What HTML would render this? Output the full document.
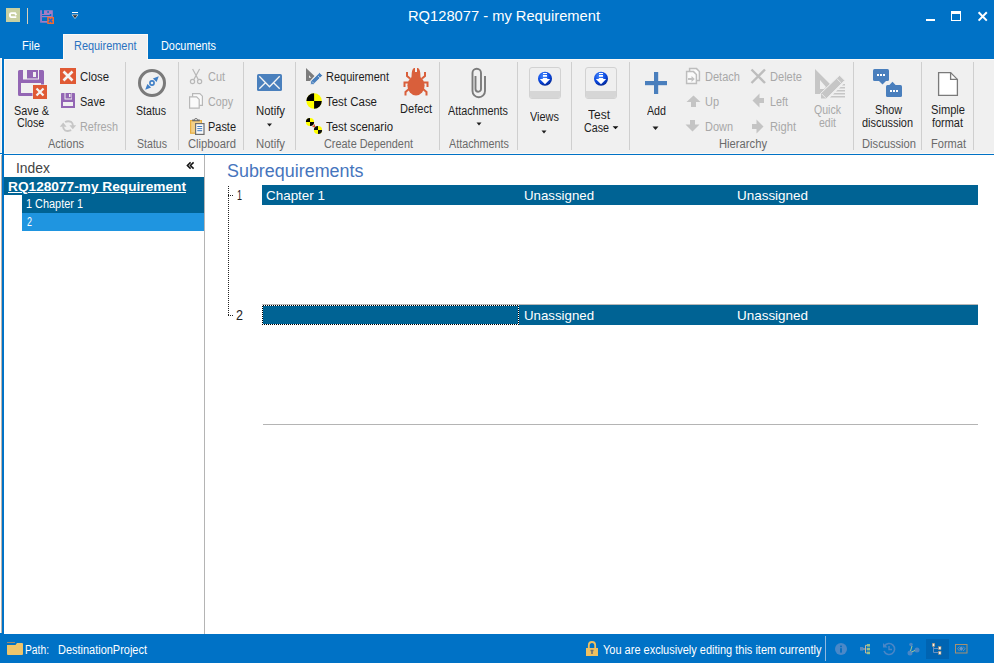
<!DOCTYPE html>
<html><head><meta charset="utf-8"><style>
html,body{margin:0;padding:0;}
body{width:994px;height:663px;position:relative;overflow:hidden;background:#ffffff;font-family:"Liberation Sans", sans-serif;}
.tx{position:absolute;white-space:nowrap;line-height:1;transform-origin:0 0;}
.r{position:absolute;}
svg{position:absolute;overflow:visible;}
</style></head><body>
<!-- title bar + tabs -->
<div class="r" style="left:0;top:0;width:994px;height:59px;background:#0072C6"></div>
<div class="r" style="left:6px;top:8px;width:14px;height:14px;background:#c8d0a2"></div>
<svg style="left:6px;top:8px" width="14" height="14"><path d="M10.2 7.2 L9.1 5.1 H5.4 Q3.9 5.1 3.9 7.1 Q3.9 9.1 5.4 9.1 H10.3" fill="none" stroke="#fff" stroke-width="1.9"/></svg>
<div class="r" style="left:27px;top:8px;width:1px;height:16px;background:#d8d0b8"></div>
<svg style="left:40px;top:10px" width="15" height="15">
 <g fill="#a67cc4">
 <rect x="0.2" y="0.2" width="1.7" height="12.5"/>
 <path d="M4 0.2 H12.8 V7.2 H11.3 V4 H9.8 V5 H1.9 V4 H4 Z M7.2 1.3 V2.8 H9 V1.3 Z" fill-rule="evenodd"/>
 <rect x="1.9" y="6" width="10" height="1.2"/>
 <rect x="1.9" y="11" width="6" height="1.7"/>
 </g>
 <rect x="7.2" y="7" width="6.8" height="7" fill="#f06a30"/><path d="M8.8 8.6 L12.4 12.4 M12.4 8.6 L8.8 12.4" stroke="#1a6ad0" stroke-width="1.4"/>
</svg>
<div class="r" style="left:72px;top:12px;width:6px;height:1.2px;background:#fff"></div>
<svg style="left:71px;top:14px" width="8" height="6"><path d="M1 0.8 L7 0.8 L4 4.6 Z" fill="#333" stroke="#fff" stroke-width="0.6"/></svg>
<!-- window buttons -->
<div class="r" style="left:926px;top:19px;width:9px;height:2px;background:#fff"></div>
<div class="r" style="left:951px;top:11px;width:8px;height:6px;border:1px solid #fff;border-top-width:3px"></div>
<svg style="left:977px;top:11px" width="12" height="11"><path d="M1.6 1.2 L9.8 9.6 M9.8 1.2 L1.6 9.6" stroke="#fff" stroke-width="2"/></svg>
<!-- active tab -->
<div class="r" style="left:63px;top:34px;width:85px;height:26px;background:#fdfaf6"></div>
<div class="r" style="left:64px;top:35px;width:83px;height:25px;background:#f0f0f0"></div>
<!-- ribbon -->
<div class="r" style="left:0;top:58px;width:2px;height:96px;background:#f0f0f0"></div>
<div class="r" style="left:1px;top:58px;width:1px;height:95px;background:#fdfaf6"></div>
<div class="r" style="left:0;top:152px;width:2px;height:1px;background:#fdfaf6"></div>
<div class="r" style="left:0;top:153px;width:2px;height:1px;background:#0072C6"></div>
<div class="r" style="left:2px;top:59px;width:2px;height:575px;background:#0072C6"></div>
<div class="r" style="left:4px;top:59px;width:990px;height:95px;background:#fdfaf6"></div>
<div class="r" style="left:5px;top:60px;width:989px;height:93px;background:#f0f0f0"></div>
<div class="r" style="left:64px;top:59px;width:83px;height:1px;background:#f0f0f0"></div>
<div class="r" style="left:4px;top:154px;width:990px;height:1px;background:#0072C6"></div>
<div class="r" style="left:1px;top:155px;width:1px;height:478px;background:#bcb4ac"></div>
<!-- separators -->
<div class="r" style="left:125px;top:62px;width:1px;height:88px;background:#cfcfcf"></div>
<div class="r" style="left:178px;top:62px;width:1px;height:88px;background:#cfcfcf"></div>
<div class="r" style="left:243px;top:62px;width:1px;height:88px;background:#cfcfcf"></div>
<div class="r" style="left:295px;top:62px;width:1px;height:88px;background:#cfcfcf"></div>
<div class="r" style="left:439px;top:62px;width:1px;height:88px;background:#cfcfcf"></div>
<div class="r" style="left:517px;top:62px;width:1px;height:88px;background:#cfcfcf"></div>
<div class="r" style="left:571px;top:62px;width:1px;height:88px;background:#cfcfcf"></div>
<div class="r" style="left:629px;top:62px;width:1px;height:88px;background:#cfcfcf"></div>
<div class="r" style="left:853px;top:62px;width:1px;height:88px;background:#cfcfcf"></div>
<div class="r" style="left:921px;top:62px;width:1px;height:88px;background:#cfcfcf"></div>
<div class="r" style="left:973px;top:62px;width:1px;height:88px;background:#cfcfcf"></div>
<!-- index panel -->
<div class="r" style="left:204px;top:155px;width:1px;height:479px;background:#b4b4b4"></div>
<div class="r" style="left:4px;top:177px;width:200px;height:18px;background:#006394"></div>
<div class="r" style="left:22px;top:195px;width:182px;height:18px;background:#006394"></div>
<div class="r" style="left:22px;top:213px;width:182px;height:18px;background:#1f95e0"></div>
<!-- content bars -->
<div class="r" style="left:262px;top:185px;width:716px;height:20px;background:#006394"></div>
<div class="r" style="left:262px;top:304px;width:716px;height:1px;background:#b8b8b8"></div>
<div class="r" style="left:262px;top:305px;width:716px;height:20px;background:#006394"></div>
<svg style="left:262px;top:304px" width="258" height="22" shape-rendering="crispEdges">
<defs><pattern id="chk" width="2" height="2" patternUnits="userSpaceOnUse"><rect width="2" height="2" fill="#fff"/><rect width="1" height="1" fill="#000"/><rect x="1" y="1" width="1" height="1" fill="#000"/></pattern></defs>
<rect x="0" y="1" width="257" height="1" fill="url(#chk)"/><rect x="0" y="20" width="257" height="1" fill="url(#chk)"/>
<rect x="0" y="1" width="1" height="20" fill="url(#chk)"/><rect x="256" y="1" width="1" height="20" fill="url(#chk)"/>
</svg>
<div class="r" style="left:263px;top:424px;width:715px;height:1px;background:#b4b4b4"></div>
<!-- status bar -->
<div class="r" style="left:0;top:633px;width:4px;height:1px;background:#0072C6"></div>
<div class="r" style="left:0;top:634px;width:994px;height:29px;background:#0072C6"></div>
<svg style="left:0;top:0" width="994" height="663" viewBox="0 0 994 663">
<!-- Save & Close big -->
<g fill="#9366b4">
 <path d="M19.5 70 H23 V79.5 H39 V70 H42.5 Q44 70 44 71.5 V96 H19.5 Q18 96 18 94.5 V71.5 Q18 70 19.5 70 Z M21 83 V93 H41 V83 Z" fill-rule="evenodd"/>
 <path d="M27 70 H38 V78.5 H27 Z M33 72 V77 H36 V72 Z" fill-rule="evenodd"/>
</g>
<rect x="32.5" y="84.5" width="15" height="15" fill="#f0f0f0"/>
<rect x="33" y="85" width="14" height="14" fill="#e05a35"/>
<path d="M36.5 88.5 L43.5 95.5 M43.5 88.5 L36.5 95.5" stroke="#f4f4f4" stroke-width="2.2"/>
<!-- Close small -->
<rect x="60" y="68" width="16" height="16" fill="#e05a35"/>
<path d="M63.5 71.5 L72.5 80.5 M72.5 71.5 L63.5 80.5" stroke="#f4f4f4" stroke-width="2.6"/>
<!-- Save small -->
<g fill="#9366b4">
 <path d="M61.8 93 H64.5 V99.5 H72 V93 H74.2 Q75 93 75 93.8 V108 H61 V93.8 Q61 93 61.8 93 Z M63 102 V106 H73 V102 Z" fill-rule="evenodd"/>
 <path d="M65.5 93 H71.5 V98.5 H65.5 Z M69 94 V97 H70.5 V94 Z" fill-rule="evenodd"/>
</g>
<!-- Refresh -->
<g fill="none" stroke="#c6c6c6" stroke-width="1.9">
 <path d="M65 122 Q68 120.5 71 121.8 Q72.8 123 73 126"/>
 <path d="M71.2 130.2 Q68 131.6 65 130.3 Q63.2 129.2 63.1 126.5"/>
</g>
<path d="M69.4 125.3 L76.2 125.3 L72.8 129.3 Z M59.8 126.8 L66.6 126.8 L63.2 122.6 Z" fill="#c6c6c6"/>
<!-- Status compass -->
<circle cx="152" cy="83" r="12.5" fill="none" stroke="#7a7a7a" stroke-width="3"/>
<path d="M158.8 76.2 L156.6 82.1 L152.9 78.4 Z M145.2 89.8 L147.4 83.9 L151.1 87.6 Z" fill="#3f7fc6"/>
<circle cx="152" cy="83" r="2.1" fill="none" stroke="#3f7fc6" stroke-width="1.6"/>
<!-- Cut -->
<g fill="none" stroke="#b8b8b8" stroke-width="1.2">
 <circle cx="192.5" cy="81.5" r="2.1"/><circle cx="199.6" cy="81.5" r="2.1"/>
 <path d="M193.8 79.6 L199.6 69 M198.3 79.6 L192.6 69"/>
</g>
<!-- Copy -->
<g fill="#fafafa" stroke="#b8b8b8" stroke-width="1.2">
 <path d="M192.6 93.6 H199.8 L202.4 96.2 V105.4 H192.6 Z"/>
 <path d="M189.6 96.8 H196.6 L199.2 99.4 V108.2 H189.6 Z"/>
</g>
<!-- Paste -->
<rect x="190.6" y="120.6" width="10.8" height="12.6" fill="#f2cf88" stroke="#e8ae40" stroke-width="1.2"/>
<path d="M192.2 121.3 H199.8 V119.6 H197.8 Q197.3 118 196 118 Q194.7 118 194.2 119.6 H192.2 Z" fill="#6a6a6a"/>
<rect x="195" y="119.2" width="2" height="0.9" fill="#e8e8e8"/>
<rect x="195.6" y="123.6" width="8.4" height="10.8" fill="#fafafa" stroke="#6e6e6e" stroke-width="1.2"/>
<path d="M197.3 126.5 H202.2 M197.3 128.6 H202.2 M197.3 130.7 H202.2" stroke="#3a76c0" stroke-width="0.95"/>
<!-- Notify envelope -->
<rect x="257" y="74" width="25" height="17" rx="1.6" fill="#4a80bd"/>
<path d="M259.3 76.2 L269.5 86.8 L279.7 76.2 M259.3 88.8 L265.4 82.7 M273.6 82.7 L279.7 88.8" fill="none" stroke="#f4f4f4" stroke-width="1.3"/>
<path d="M267 123.5 H272 L269.5 126.5 Z" fill="#1e1e1e"/>
<!-- Requirement icon -->
<path d="M306 68 L314.5 76 L310 81 L306 81 Z M309 75.2 V77.8 H311.2 Z" fill="#7c7c7c" fill-rule="evenodd"/>
<path d="M319.6 72.6 L322.6 75.6 L313.4 84.4 L310.6 84.4 L310.6 81.2 Z" fill="#4a80bd" stroke="#f0f0f0" stroke-width="0.8"/>
<path d="M318 76 L320 78 M312 81.5 L313.8 83.3" stroke="#e8eef6" stroke-width="0.7"/>
<!-- Test case -->
<circle cx="314.1" cy="101" r="7.7" fill="#ffff00"/>
<path d="M314.1 101 V93.3 A7.7 7.7 0 0 0 306.4 101 Z M314.1 101 V108.7 A7.7 7.7 0 0 0 321.8 101 Z" fill="#000"/>
<!-- Test scenario -->
<circle cx="310" cy="122" r="4.1" fill="#ffff00"/>
<path d="M310 122 V117.9 A4.1 4.1 0 0 0 305.9 122 Z M310 122 V126.1 A4.1 4.1 0 0 0 314.1 122 Z" fill="#000"/>
<circle cx="318" cy="130" r="4.1" fill="#ffff00"/>
<path d="M318 130 V125.9 A4.1 4.1 0 0 0 313.9 130 Z M318 130 V134.1 A4.1 4.1 0 0 0 322.1 130 Z" fill="#111"/>
<path d="M312 127 L315 124 L315 127.2 Z" fill="#e04a30"/>
<!-- Defect bug -->
<g fill="#d95f3b">
 <ellipse cx="416" cy="85.5" rx="8.6" ry="10"/>
 <path d="M411.5 77 Q411.5 69 414 68 L415 68 L415 72 L417 72 L417 68 L418 68 Q420.5 69 420.5 77 Z"/>
</g>
<g fill="none" stroke="#d95f3b" stroke-width="2">
 <path d="M410 78.5 L407 76 L407 72"/><path d="M422 78.5 L425 76 L425 72"/>
 <path d="M408 82.5 L404.5 82.5 L404.5 87"/><path d="M424 82.5 L427.5 82.5 L427.5 87"/>
 <path d="M409 89 L405.5 92 L405.5 95.5"/><path d="M423 89 L426.5 92 L426.5 95.5"/>
</g>
<!-- Attachments paperclip -->
<path d="M475.5 76 V89 A2.75 2.75 0 0 0 481 89 V73 A4.25 4.25 0 0 0 472.5 73 V91 A6.25 6.25 0 0 0 485 91 V76" fill="none" stroke="#7b7b7b" stroke-width="1.9"/>
<path d="M476.5 122.5 H481.5 L479 125.5 Z" fill="#1e1e1e"/>
<!-- Views button -->
<rect x="529.5" y="67.5" width="31" height="31" rx="2.5" fill="#efefef" stroke="#d2d2d2"/>
<path d="M530 91 H560 V96 Q560 98 558 98 H532 Q530 98 530 96 Z" fill="#d6d6d6"/>
<defs><radialGradient id="bg" cx="0.4" cy="0.3" r="0.8"><stop offset="0" stop-color="#4a8cff"/><stop offset="0.55" stop-color="#0a48e0"/><stop offset="1" stop-color="#001a78"/></radialGradient></defs>
<circle cx="545" cy="78.8" r="7" fill="url(#bg)"/>
<path d="M543 72.9 H547 V73.9 H543 Z M543 75.1 H547 V76.8 H543 Z M542.8 78.1 H547.2 V79.1 H550.2 L545 84.2 L539.8 79.1 H542.8 Z" fill="#fff"/>
<path d="M541.5 130.5 H546.5 L544 133.5 Z" fill="#1e1e1e"/>
<!-- Test Case button -->
<rect x="585.5" y="67.5" width="31" height="31" rx="2.5" fill="#efefef" stroke="#d2d2d2"/>
<path d="M586 91 H616 V96 Q616 98 614 98 H588 Q586 98 586 96 Z" fill="#d6d6d6"/>
<circle cx="601" cy="78.8" r="7" fill="url(#bg)"/>
<path d="M599 72.9 H603 V73.9 H599 Z M599 75.1 H603 V76.8 H599 Z M598.8 78.1 H603.2 V79.1 H606.2 L601 84.2 L595.8 79.1 H598.8 Z" fill="#fff"/>
<path d="M612.6 126.2 H618.4 L615.5 129.3 Z" fill="#111"/>
<!-- Add plus -->
<rect x="645" y="81" width="22" height="4.2" fill="#4a7fbd"/>
<rect x="654" y="72" width="4.2" height="22" fill="#4a7fbd"/>
<path d="M652.5 126.5 H658.5 L655.5 130 Z" fill="#1e1e1e"/>
<!-- Detach -->
<g fill="#fafafa" stroke="#bdbdbd" stroke-width="1.5">
 <path d="M689.6 68.6 H696.5 L699.4 71.5 V80.4 H689.6 Z"/>
 <path d="M686.6 71.6 H693.5 L696.4 74.5 V83.4 H686.6 Z"/>
</g>
<path d="M688 78 H691.5 V76 L694.8 79 L691.5 82 V80 H688 Z" fill="#c2c2c2"/>
<!-- Up / Down -->
<path d="M693.5 95.5 L700.5 102 H696 V107 H691 V102 H686.5 Z" fill="#c4c4c4"/>
<path d="M692.5 131.5 L699.5 124.5 H695 V120 H690 V124.5 H685.5 Z" fill="#c4c4c4"/>
<!-- Delete / Left / Right -->
<path d="M751.5 69.5 L765 83 M765 69.5 L751.5 83" stroke="#bdbdbd" stroke-width="2.4"/>
<path d="M752.5 100.5 L759.5 93.5 V98 H764 V103 H759.5 V107.5 Z" fill="#c4c4c4"/>
<path d="M763.5 126.5 L756.5 119.5 V124 H752 V129 H756.5 V133.5 Z" fill="#c4c4c4"/>
<!-- Quick edit -->
<path d="M815 69 L830 84 L820 94 L815 94 Z M820 80 V89 L824 89 L826 87 Z" fill="#c6c6c6" fill-rule="evenodd"/>
<path d="M845.5 80 L821 104.5 H836 M845.5 83.5 V98" fill="none"/>
<path d="M843.5 84 H845 V85.6 H842 Z M840.5 87 H845 V88.6 H839 Z M837.5 90 H845 V91.6 H836 Z M834.5 93 H845 V94.6 H833 Z M831.5 96 H845 V97.6 H830 Z" fill="#c6c6c6"/>
<path d="M839.6 75.2 L844.8 80.4 L826.2 99 L820.5 99 L820.5 93.6 Z" fill="#c6c6c6" stroke="#f0f0f0" stroke-width="1"/>
<path d="M837.2 79 L841 82.8 M821.8 94 L825.6 97.8" stroke="#f0f0f0" stroke-width="0.9"/>
<!-- Discussion -->
<rect x="873" y="69" width="16" height="12" rx="1.5" fill="#4a7fbd"/>
<path d="M878.5 80.5 L886.5 80.5 L882.5 84.5 Z" fill="#4a7fbd"/>
<rect x="886" y="85" width="16" height="12" rx="1.5" fill="#4a7fbd"/>
<path d="M889 85.5 L896 85.5 L892.5 81.8 Z" fill="#4a7fbd"/>
<path d="M877 74 h2 v2 h-2 Z M880 74 h2 v2 h-2 Z M883 74 h2 v2 h-2 Z M890 90 h2 v2 h-2 Z M893 90 h2 v2 h-2 Z M896 90 h2 v2 h-2 Z" fill="#fff"/>
<!-- Page -->
<path d="M938.6 72.6 H950.6 L957.4 79.4 V95.4 H938.6 Z" fill="#fff" stroke="#7a7a7a" stroke-width="1.3"/>
<path d="M950.6 72.6 V79.4 H957.4" fill="none" stroke="#7a7a7a" stroke-width="1.3"/>
<!-- Index collapse glyph -->
<path d="M190.6 162.4 L187.4 165.5 L190.6 168.6 M193.6 162.4 L190.4 165.5 L193.6 168.6" fill="none" stroke="#111" stroke-width="1.5"/>
<!-- tree dotted lines -->
<path d="M228.5 186 V316" stroke="#222" stroke-width="1" stroke-dasharray="1 1"/>
<path d="M230 195.5 H233 M230 315.5 H233" stroke="#222" stroke-width="1" stroke-dasharray="1 1"/><rect x="228" y="195" width="1" height="1" fill="#222"/><rect x="228" y="315" width="1" height="1" fill="#222"/>
<!-- status bar icons -->
<path d="M7 645 H15.5 L17 643 H22 Q23 643 23 644 V654 Q23 655 22 655 H8 Q7 655 7 654 Z" fill="#eec56c"/>
<rect x="7" y="642" width="8" height="1" fill="#9a8a70"/>
<path d="M588.8 648 V645.5 Q588.8 642 592 642 Q595.2 642 595.2 645.5 V648" fill="none" stroke="#f0c060" stroke-width="1.8"/>
<rect x="586" y="648" width="12" height="8" fill="#f0c060"/>
<path d="M590.5 650.5 H593.5 M592 650.5 V654" stroke="#707070" stroke-width="1.6"/>
<rect x="825" y="636" width="1" height="25" fill="#8fb8e0"/>
<circle cx="841" cy="649" r="6" fill="#4a88c8"/>
<rect x="840" y="645.6" width="2" height="1.6" fill="#0a70c0"/><rect x="840" y="648.2" width="2" height="4.4" fill="#0a70c0"/>
<rect x="860" y="647" width="3.2" height="3.6" fill="#5a8cc0"/>
<path d="M863 649 H866.5 M865.5 645.3 V653 M865.5 645.3 H867 M865.5 653 H867" fill="none" stroke="#c8b49c" stroke-width="1"/>
<g fill="#98c08c"><rect x="867" y="644" width="3" height="2.6"/><rect x="867" y="647.8" width="3" height="2.6"/><rect x="867" y="651.6" width="3" height="2.6"/></g>
<path d="M884.5 646 A5.5 5.5 0 1 1 884 651" fill="none" stroke="#4a86c6" stroke-width="1.6"/>
<path d="M883 643 L883 647.5 L887.5 647.5 Z" fill="#4a86c6"/>
<path d="M889 646 V649.5 H892" fill="none" stroke="#4a86c6" stroke-width="1.4"/>
<circle cx="910" cy="653" r="2.5" fill="#4a86c6"/><circle cx="917" cy="650" r="2.5" fill="#4a86c6"/><circle cx="911" cy="644.5" r="1.8" fill="#4a86c6"/>
<path d="M910.5 651 L912 646 M911.5 652 L915 650.5" stroke="#a8c890" stroke-width="1"/>
<rect x="926" y="639" width="23" height="20" fill="#0064b2"/>
<path d="M933.5 646 V652.5 H938.5 M933.5 648.5 H938.5" fill="none" stroke="#6890c0" stroke-width="1"/>
<rect x="932.3" y="643.3" width="2.4" height="3" fill="#f4f4f0" stroke="#a08a70" stroke-width="0.6"/>
<rect x="938.6" y="646.6" width="2.4" height="3" fill="#f4f4f0" stroke="#a08a70" stroke-width="0.6"/>
<rect x="938.6" y="651.3" width="2.4" height="3" fill="#f4f4f0" stroke="#a08a70" stroke-width="0.6"/>
<rect x="955.5" y="644.5" width="11.5" height="8.5" fill="none" stroke="#a89070" stroke-width="1"/>
<path d="M957.5 648.7 L959.5 646.5 M957.5 648.7 L959.5 651 M965 648.7 L963 646.5 M965 648.7 L963 651" stroke="#8a98a8" stroke-width="0.8"/>
<path d="M961.2 646.3 L963.3 648.7 L961.2 651.1 L959.1 648.7 Z" fill="#6a98c8"/>
</svg>

<div class="tx" id="t0" style="left:408px;top:8.30px;font-size:15px;color:#ffffff;transform:scaleX(0.9799);">RQ128077 - my Requirement</div><div class="tx" id="t1" style="left:22px;top:39.84px;font-size:12px;color:#ffffff;transform:scaleX(0.9305);">File</div><div class="tx" id="t2" style="left:73.5px;top:39.84px;font-size:12px;color:#2a72c0;transform:scaleX(0.9097);">Requirement</div><div class="tx" id="t3" style="left:160.5px;top:39.84px;font-size:12px;color:#ffffff;transform:scaleX(0.9060);">Documents</div><div class="tx" id="t4" style="left:14px;top:104.84px;font-size:12px;color:#1e1e1e;transform:scaleX(0.9043);">Save &amp;</div><div class="tx" id="t5" style="left:17.3px;top:116.84px;font-size:12px;color:#1e1e1e;transform:scaleX(0.8896);">Close</div><div class="tx" id="t6" style="left:80px;top:70.84px;font-size:12px;color:#1e1e1e;transform:scaleX(0.9450);">Close</div><div class="tx" id="t7" style="left:80px;top:95.84px;font-size:12px;color:#1e1e1e;transform:scaleX(0.9138);">Save</div><div class="tx" id="t8" style="left:80px;top:120.84px;font-size:12px;color:#a8a8a8;transform:scaleX(0.9041);">Refresh</div><div class="tx" id="t9" style="left:136px;top:104.84px;font-size:12px;color:#1e1e1e;transform:scaleX(0.8815);">Status</div><div class="tx" id="t10" style="left:208px;top:70.84px;font-size:12px;color:#a8a8a8;transform:scaleX(0.9097);">Cut</div><div class="tx" id="t11" style="left:208px;top:95.84px;font-size:12px;color:#a8a8a8;transform:scaleX(0.8924);">Copy</div><div class="tx" id="t12" style="left:208px;top:120.84px;font-size:12px;color:#1e1e1e;transform:scaleX(0.9124);">Paste</div><div class="tx" id="t13" style="left:256px;top:104.84px;font-size:12px;color:#1e1e1e;transform:scaleX(0.9450);">Notify</div><div class="tx" id="t14" style="left:326px;top:70.84px;font-size:12px;color:#1e1e1e;transform:scaleX(0.9170);">Requirement</div><div class="tx" id="t15" style="left:326px;top:95.84px;font-size:12px;color:#1e1e1e;transform:scaleX(0.9558);">Test Case</div><div class="tx" id="t16" style="left:326px;top:120.84px;font-size:12px;color:#1e1e1e;transform:scaleX(0.9476);">Test scenario</div><div class="tx" id="t17" style="left:400px;top:102.84px;font-size:12px;color:#1e1e1e;transform:scaleX(0.9225);">Defect</div><div class="tx" id="t18" style="left:448px;top:104.84px;font-size:12px;color:#1e1e1e;transform:scaleX(0.8995);">Attachments</div><div class="tx" id="t19" style="left:530px;top:110.84px;font-size:12px;color:#1e1e1e;transform:scaleX(0.9120);">Views</div><div class="tx" id="t20" style="left:588px;top:108.84px;font-size:12px;color:#1e1e1e;transform:scaleX(0.9993);">Test</div><div class="tx" id="t21" style="left:584px;top:121.84px;font-size:12px;color:#1e1e1e;transform:scaleX(0.8924);">Case</div><div class="tx" id="t22" style="left:647px;top:104.84px;font-size:12px;color:#1e1e1e;transform:scaleX(0.8895);">Add</div><div class="tx" id="t23" style="left:705px;top:70.84px;font-size:12px;color:#a8a8a8;transform:scaleX(0.9203);">Detach</div><div class="tx" id="t24" style="left:705px;top:95.84px;font-size:12px;color:#a8a8a8;transform:scaleX(0.9124);">Up</div><div class="tx" id="t25" style="left:705px;top:120.84px;font-size:12px;color:#a8a8a8;transform:scaleX(0.9124);">Down</div><div class="tx" id="t26" style="left:770px;top:70.84px;font-size:12px;color:#a8a8a8;transform:scaleX(0.9225);">Delete</div><div class="tx" id="t27" style="left:770px;top:95.84px;font-size:12px;color:#a8a8a8;transform:scaleX(0.8993);">Left</div><div class="tx" id="t28" style="left:770px;top:120.84px;font-size:12px;color:#a8a8a8;transform:scaleX(0.9281);">Right</div><div class="tx" id="t29" style="left:814px;top:103.84px;font-size:12px;color:#a8a8a8;transform:scaleX(0.8798);">Quick</div><div class="tx" id="t30" style="left:819px;top:116.84px;font-size:12px;color:#a8a8a8;transform:scaleX(0.8781);">edit</div><div class="tx" id="t31" style="left:875px;top:103.84px;font-size:12px;color:#1e1e1e;transform:scaleX(0.8991);">Show</div><div class="tx" id="t32" style="left:862px;top:116.84px;font-size:12px;color:#1e1e1e;transform:scaleX(0.9102);">discussion</div><div class="tx" id="t33" style="left:931px;top:103.84px;font-size:12px;color:#1e1e1e;transform:scaleX(0.9267);">Simple</div><div class="tx" id="t34" style="left:932px;top:116.84px;font-size:12px;color:#1e1e1e;transform:scaleX(0.9113);">format</div><div class="tx" id="t35" style="left:48px;top:137.84px;font-size:12px;color:#6a6a6a;transform:scaleX(0.9146);">Actions</div><div class="tx" id="t36" style="left:137px;top:137.84px;font-size:12px;color:#6a6a6a;transform:scaleX(0.8815);">Status</div><div class="tx" id="t37" style="left:188px;top:137.84px;font-size:12px;color:#6a6a6a;transform:scaleX(0.9343);">Clipboard</div><div class="tx" id="t38" style="left:256px;top:137.84px;font-size:12px;color:#6a6a6a;transform:scaleX(0.9450);">Notify</div><div class="tx" id="t39" style="left:324px;top:137.84px;font-size:12px;color:#6a6a6a;transform:scaleX(0.9074);">Create Dependent</div><div class="tx" id="t40" style="left:449px;top:137.84px;font-size:12px;color:#6a6a6a;transform:scaleX(0.8995);">Attachments</div><div class="tx" id="t41" style="left:719px;top:137.84px;font-size:12px;color:#6a6a6a;transform:scaleX(0.9346);">Hierarchy</div><div class="tx" id="t42" style="left:862px;top:137.84px;font-size:12px;color:#6a6a6a;transform:scaleX(0.9305);">Discussion</div><div class="tx" id="t43" style="left:931px;top:137.84px;font-size:12px;color:#6a6a6a;transform:scaleX(0.9207);">Format</div><div class="tx" id="t44" style="left:16px;top:160.30px;font-size:15px;color:#444444;transform:scaleX(0.9264);">Index</div><div class="tx" id="t45" style="left:8px;top:180.00px;font-size:13px;color:#ffffff;font-weight:bold;text-decoration:underline;transform:scaleX(1.0528);">RQ128077-my Requirement</div><div class="tx" id="t46" style="left:26px;top:197.84px;font-size:12px;color:#ffffff;transform:scaleX(0.9088);">1 Chapter 1</div><div class="tx" id="t47" style="left:27px;top:215.84px;font-size:12px;color:#ffffff;transform:scaleX(0.7477);">2</div><div class="tx" id="t48" style="left:226.6px;top:161.76px;font-size:18px;color:#4675bd;transform:scaleX(0.9951);">Subrequirements</div><div class="tx" id="t49" style="left:237px;top:188.15px;font-size:14px;color:#222222;transform:scaleX(0.6413);">1</div><div class="tx" id="t50" style="left:236px;top:308.15px;font-size:14px;color:#222222;transform:scaleX(0.8978);">2</div><div class="tx" id="t51" style="left:266px;top:189.00px;font-size:13px;color:#ffffff;transform:scaleX(1.0334);">Chapter 1</div><div class="tx" id="t52" style="left:523.5px;top:189.00px;font-size:13px;color:#ffffff;transform:scaleX(1.0196);">Unassigned</div><div class="tx" id="t53" style="left:737px;top:189.00px;font-size:13px;color:#ffffff;transform:scaleX(1.0341);">Unassigned</div><div class="tx" id="t54" style="left:523.5px;top:309.00px;font-size:13px;color:#ffffff;transform:scaleX(1.0196);">Unassigned</div><div class="tx" id="t55" style="left:737px;top:309.00px;font-size:13px;color:#ffffff;transform:scaleX(1.0341);">Unassigned</div><div class="tx" id="t56" style="left:25px;top:643.84px;font-size:12px;color:#ffffff;transform:scaleX(0.8562);">Path:</div><div class="tx" id="t57" style="left:58px;top:643.84px;font-size:12px;color:#ffffff;transform:scaleX(0.9138);">DestinationProject</div><div class="tx" id="t58" style="left:602.6px;top:643.84px;font-size:12px;color:#ffffff;transform:scaleX(0.9163);">You are exclusively editing this item currently</div>
</body></html>
